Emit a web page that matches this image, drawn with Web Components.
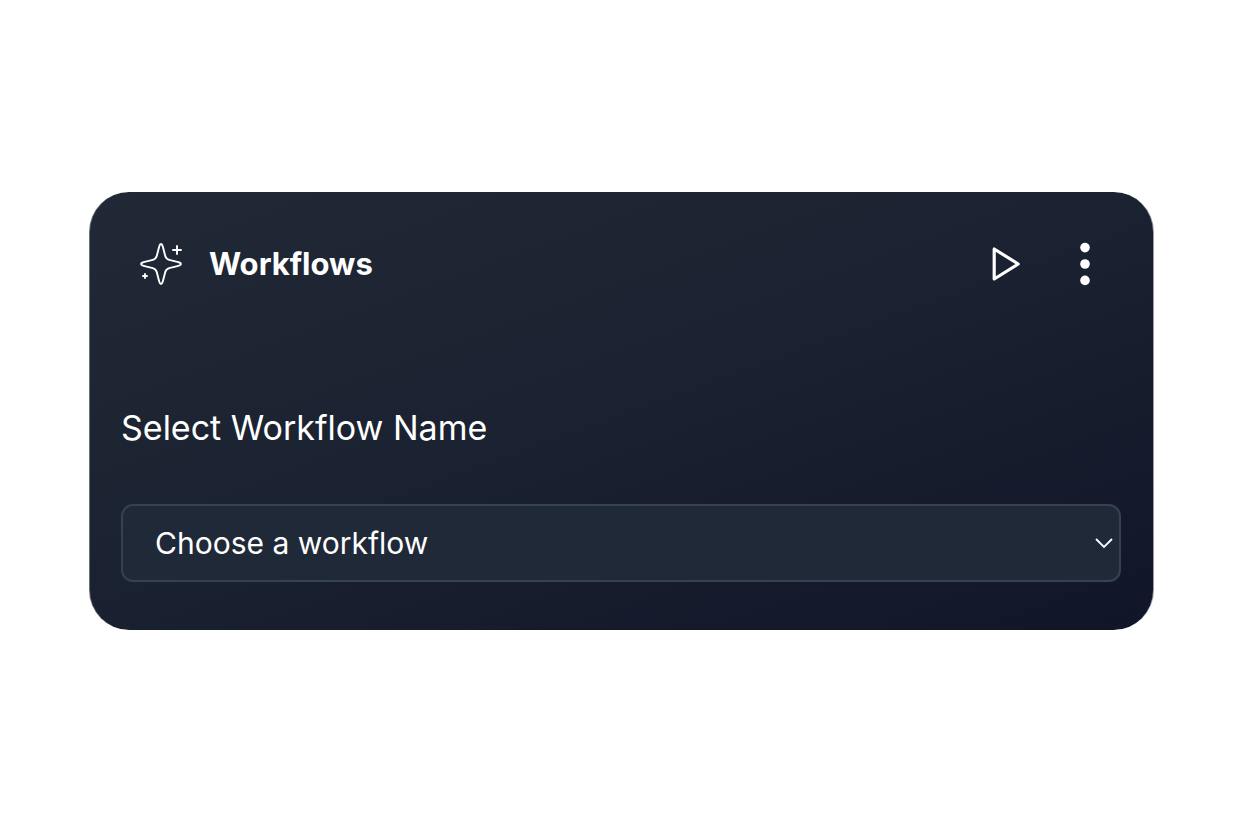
<!DOCTYPE html>
<html lang="en">
<head>
<meta charset="UTF-8">
<meta name="viewport" content="width=device-width, initial-scale=1.0">
<title>Workflows</title>
<style>
  body {
    margin: 0;
    min-height: 100vh;
    display: flex;
    align-items: center;
    background: #ffffff;
    color: #ffffff;
    font-family: Inter, "Liberation Sans", sans-serif;
  }
  workflow-card {
    flex: 1;
    margin: 0 88px 0 89px;
  }
</style>
</head>
<body>
<workflow-card>
  <card-header slot="header">
    Workflows
    <icon-button slot="actions" label="Run workflow">
      <svg width="40" height="48" viewBox="0 0 40 48" fill="none" stroke="#ffffff" stroke-width="3.2" stroke-linejoin="round">
        <path d="M9.2 9v30L33.2 24z"/>
      </svg>
    </icon-button>
    <icon-button slot="actions" label="More options">
      <svg width="40" height="48" viewBox="0 0 40 48" fill="#ffffff">
        <circle cx="20" cy="7.6" r="4.8"/>
        <circle cx="20" cy="24" r="4.8"/>
        <circle cx="20" cy="40.4" r="4.8"/>
      </svg>
    </icon-button>
  </card-header>
  <workflow-select label="Select Workflow Name" placeholder="Choose a workflow"></workflow-select>
</workflow-card>

<script>
class WorkflowCard extends HTMLElement {
  connectedCallback() {
    this.attachShadow({ mode: 'open' });
    this.shadowRoot.innerHTML = `
      <style>
        :host {
          display: flex;
          flex-direction: column;
          gap: 116px;
          padding: 48px 32px 48px 31px;
          border: 0 solid;
          border-width: 0 1px;
          border-color: transparent #9a9ca6 transparent #6b717b;
          border-radius: 40px;
          background: linear-gradient(160deg, #212936 0%, #1a2130 50%, #111528 100%);
        }
      </style>
      <slot name="header"></slot>
      <slot></slot>
    `;
  }
}
customElements.define('workflow-card', WorkflowCard);

class CardHeader extends HTMLElement {
  connectedCallback() {
    this.attachShadow({ mode: 'open' });
    this.shadowRoot.innerHTML = `
      <style>
        :host {
          display: block;
        }
        header {
          display: flex;
          align-items: center;
          justify-content: space-between;
          padding: 0 16px;
        }
        .title {
          display: flex;
          align-items: center;
          gap: 24px;
        }
        h2 {
          margin: 0;
          font-size: 31px;
          font-weight: 700;
          line-height: 48px;
        }
        .actions {
          display: flex;
          gap: 40px;
        }
      </style>
      <header>
        <div class="title">
          <svg width="48" height="48" viewBox="0 0 48 48" fill="none" stroke="#ffffff" stroke-width="1.9" stroke-linecap="round" stroke-linejoin="round" aria-hidden="true">
            <path d="M24 4C25.2 4 25.4 5 25.8 6.6L28.2 15.8C28.8 18.2 29.8 19.2 32.2 19.8L41.4 22.2C43 22.6 44 22.8 44 24C44 25.2 43 25.4 41.4 25.8L32.2 28.2C29.8 28.8 28.8 29.8 28.2 32.2L25.8 41.4C25.4 43 25.2 44 24 44C22.8 44 22.6 43 22.2 41.4L19.8 32.2C19.2 29.8 18.2 28.8 15.8 28.2L6.6 25.8C5 25.4 4 25.2 4 24C4 22.8 5 22.6 6.6 22.2L15.8 19.8C18.2 19.2 19.2 18.2 19.8 15.8L22.2 6.6C22.6 5 22.8 4 24 4Z"/>
            <path d="M40 6v8M36 10h8M8 34v4M6 36h4"/>
          </svg>
          <h2><slot></slot></h2>
        </div>
        <div class="actions"><slot name="actions"></slot></div>
      </header>
    `;
  }
}
customElements.define('card-header', CardHeader);

class IconButton extends HTMLElement {
  connectedCallback() {
    this.attachShadow({ mode: 'open' });
    this.shadowRoot.innerHTML = `
      <style>
        :host {
          display: block;
        }
        button {
          display: flex;
          padding: 0;
          border: 0;
          background: none;
          color: inherit;
          cursor: pointer;
        }
      </style>
      <button type="button" aria-label="${this.getAttribute('label')}"><slot></slot></button>
    `;
  }
}
customElements.define('icon-button', IconButton);

class WorkflowSelect extends HTMLElement {
  connectedCallback() {
    this.attachShadow({ mode: 'open' });
    this.shadowRoot.innerHTML = `
      <style>
        :host {
          display: flex;
          flex-direction: column;
          gap: 52px;
        }
        label {
          font-size: 34px;
          line-height: 48px;
        }
        .control {
          display: grid;
          align-items: center;
        }
        select, svg {
          grid-area: 1 / 1;
        }
        select {
          appearance: none;
          box-sizing: border-box;
          width: 100%;
          height: 78px;
          margin: 0;
          padding: 0 32px;
          border: 2px solid #374151;
          border-radius: 12px;
          background: #202938;
          color: inherit;
          font-family: inherit;
          font-size: 30px;
        }
        svg {
          justify-self: end;
          margin-right: 8px;
          pointer-events: none;
        }
      </style>
      <label for="workflow">${this.getAttribute('label')}</label>
      <div class="control">
        <select id="workflow">
          <option>${this.getAttribute('placeholder')}</option>
        </select>
        <svg width="18" height="18" viewBox="0 0 18 18" fill="none" stroke="#ffffff" stroke-width="1.8" aria-hidden="true">
          <path d="M1 5l8 8 8-8"/>
        </svg>
      </div>
    `;
  }
}
customElements.define('workflow-select', WorkflowSelect);
</script>
</body>
</html>
